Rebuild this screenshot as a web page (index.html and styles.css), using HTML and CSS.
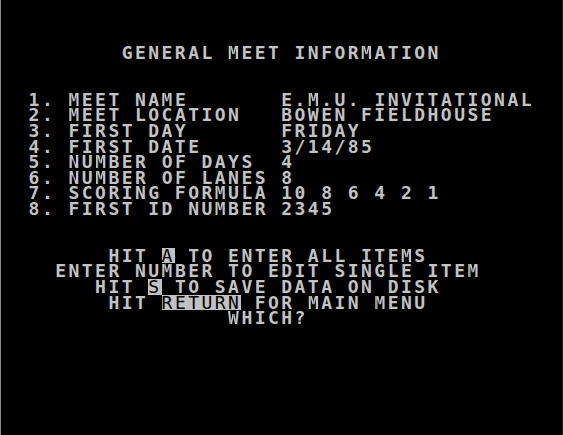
FILE: index.html
```html
<!DOCTYPE html>
<html lang="en">
<head>
<meta charset="utf-8">
<title>General Meet Information</title>
<link rel="stylesheet" href="styles.css">
</head>
<body>
<main class="screen">
  <div class="row">         GENERAL <span class="m">M</span>EET INFOR<span class="m">M</span>ATION</div>
  <div class="row"></div>
  <div class="row"></div>
  <div class="row">  1. <span class="m">M</span>EET NA<span class="m">M</span>E       E.<span class="m">M</span>.U. INVITATIONAL</div>
  <div class="row">  2. <span class="m">M</span>EET LOCATION   BOWEN FIELDHOUSE</div>
  <div class="row">  3. FIRST DAY       FRIDAY</div>
  <div class="row">  4. FIRST DATE      3/14/85</div>
  <div class="row">  5. <span class="n">N</span>U<span class="m">M</span>BER OF DAYS  4</div>
  <div class="row">  6. <span class="n">N</span>U<span class="m">M</span>BER OF LANES 8</div>
  <div class="row">  7. SCORING FOR<span class="m">M</span>ULA 10 8 6 4 2 1</div>
  <div class="row">  8. FIRST ID NU<span class="m">M</span>BER 2345</div>
  <div class="row"></div>
  <div class="row"></div>
  <div class="row">        HIT <span class="inv">A</span> TO ENTER ALL ITE<span class="m">M</span>S</div>
  <div class="row">    ENTER NU<span class="m">M</span>BER TO EDIT SINGLE ITE<span class="m">M</span></div>
  <div class="row">       HIT <span class="inv">S</span> TO SAVE DATA ON DISK</div>
  <div class="row">        HIT <span class="inv">RETURN</span> FOR <span class="m">M</span>AIN <span class="m">M</span>ENU</div>
  <div class="row">                 <span class="m">W</span>HICH?</div>
</main>
</body>
</html>
```

FILE: styles.css
```css
html, body {
  margin: 0;
  padding: 0;
  background: #000;
}

body {
  width: 563px;
  height: 435px;
  overflow: hidden;
}

/* 40-column text screen: each cell is 13.3px wide, 15.6px tall */
.screen {
  box-sizing: border-box;
  width: 563px;
  height: 435px;
  padding: 45px 0 0 1px;
  border-left: 1px solid #8a8a8a;
  border-right: 1px solid #1c1c1c;
  background: #000;
  color: #c2c2c2;
  font-family: "DejaVu Sans Mono", "Liberation Mono", monospace;
  font-weight: bold;
  font-size: 18px;
  letter-spacing: 2.46px;
  line-height: 15.6px;
}

.row {
  height: 15.6px;
  white-space: pre;
}

/* colour fringing on letters with close vertical strokes */
.m,
.n {
  color: transparent;
  -webkit-background-clip: text;
  background-clip: text;
}

.m {
  background-image: linear-gradient(90deg,
    #c2c2c2 0, #c2c2c2 2px,
    #7fae78 2px, #7fae78 3.5px,
    #c2c2c2 3.5px, #c2c2c2 4.6px,
    #a277d6 4.6px, #a277d6 6.4px,
    #c2c2c2 6.4px);
}

.n {
  background-image: linear-gradient(90deg,
    #c2c2c2 0, #c2c2c2 4.5px,
    #9a76cc 4.5px, #9a76cc 6.5px,
    #c2c2c2 6.5px);
}

.inv {
  display: inline-block;
  height: 15.6px;
  line-height: 15.6px;
  vertical-align: top;
  background: #c2c2c2;
  color: #000;
  font-weight: normal;
}
```
